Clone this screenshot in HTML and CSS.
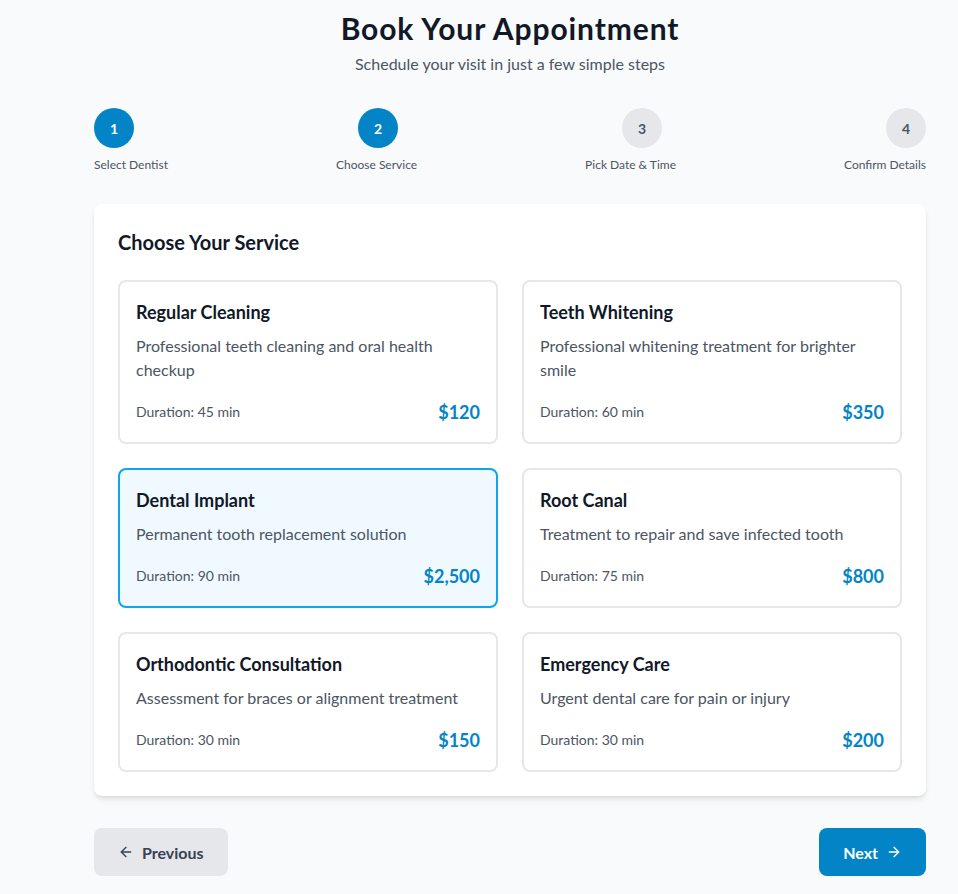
FILE: index.html
```html
<!DOCTYPE html>
<html>
<head>
<meta charset="utf-8">
<link rel="stylesheet" href="styles.css">
</head>
<body>
<div class="page">
  <header class="head">
    <h1 class="title">Book Your Appointment</h1>
    <p class="subtitle">Schedule your visit in just a few simple steps</p>
  </header>

  <div class="steps">
    <div class="circles">
      <span class="circle active">1</span>
      <span class="circle active">2</span>
      <span class="circle">3</span>
      <span class="circle">4</span>
    </div>
    <div class="labels">
      <span>Select Dentist</span>
      <span>Choose Service</span>
      <span>Pick Date &amp; Time</span>
      <span>Confirm Details</span>
    </div>
  </div>

  <section class="panel">
    <h2 class="panel-title">Choose Your Service</h2>
    <div class="grid">
      <div class="svc">
        <h3 class="svc-name">Regular Cleaning</h3>
        <p class="svc-desc">Professional teeth cleaning and oral health checkup</p>
        <div class="svc-foot"><span class="dur">Duration: 45 min</span><span class="price">$120</span></div>
      </div>
      <div class="svc">
        <h3 class="svc-name">Teeth Whitening</h3>
        <p class="svc-desc">Professional whitening treatment for brighter smile</p>
        <div class="svc-foot"><span class="dur">Duration: 60 min</span><span class="price">$350</span></div>
      </div>
      <div class="svc selected">
        <h3 class="svc-name">Dental Implant</h3>
        <p class="svc-desc">Permanent tooth replacement solution</p>
        <div class="svc-foot"><span class="dur">Duration: 90 min</span><span class="price">$2,500</span></div>
      </div>
      <div class="svc">
        <h3 class="svc-name">Root Canal</h3>
        <p class="svc-desc">Treatment to repair and save infected tooth</p>
        <div class="svc-foot"><span class="dur">Duration: 75 min</span><span class="price">$800</span></div>
      </div>
      <div class="svc">
        <h3 class="svc-name">Orthodontic Consultation</h3>
        <p class="svc-desc">Assessment for braces or alignment treatment</p>
        <div class="svc-foot"><span class="dur">Duration: 30 min</span><span class="price">$150</span></div>
      </div>
      <div class="svc">
        <h3 class="svc-name">Emergency Care</h3>
        <p class="svc-desc">Urgent dental care for pain or injury</p>
        <div class="svc-foot"><span class="dur">Duration: 30 min</span><span class="price">$200</span></div>
      </div>
    </div>
  </section>

  <div class="nav">
    <button class="btn btn-prev">
      <svg width="16" height="16" viewBox="0 0 24 24" fill="none" stroke="currentColor" stroke-width="2" stroke-linecap="round" stroke-linejoin="round"><path d="M19 12H5"/><path d="M12 19l-7-7 7-7"/></svg>
      Previous
    </button>
    <button class="btn btn-next">
      Next
      <svg width="16" height="16" viewBox="0 0 24 24" fill="none" stroke="currentColor" stroke-width="2" stroke-linecap="round" stroke-linejoin="round"><path d="M5 12h14"/><path d="M12 5l7 7-7 7"/></svg>
    </button>
  </div>
</div>
</body>
</html>
```

FILE: styles.css
```css
* { box-sizing: border-box; }
html, body { margin: 0; padding: 0; }
body {
  background: #f9fafb;
  font-family: Lato, "Noto Sans", sans-serif;
  color: #111827;
}
.page {
  width: 832px;
  margin: 0 0 0 94px;
  padding: 10px 0 40px;
}
.head { text-align: center; }
.title {
  margin: 0;
  font-size: 30px;
  line-height: 36px;
  font-weight: 700;
  letter-spacing: 0.9px;
  color: #111827;
}
.subtitle {
  margin: 6px 0 0;
  font-size: 16px;
  line-height: 24px;
  color: #4b5563;
}
.steps { margin-top: 32px; }
.circles, .labels {
  display: flex;
  justify-content: space-between;
}
.circle {
  width: 40px;
  height: 40px;
  border-radius: 50%;
  background: #e5e7eb;
  color: #4b5563;
  display: flex;
  align-items: center;
  justify-content: center;
  font-size: 14px;
  font-weight: 700;
}
.circle.active { background: #0284c7; color: #fff; }
.labels {
  margin-top: 9px;
  font-size: 12px;
  line-height: 16px;
  color: #4b5563;
}
.panel {
  margin-top: 31px;
  background: #fff;
  border-radius: 8px;
  box-shadow: 0 4px 6px -1px rgba(0,0,0,0.1), 0 2px 4px -2px rgba(0,0,0,0.1);
  padding: 24px;
}
.panel-title {
  margin: 0 0 24px;
  font-size: 20px;
  line-height: 28px;
  font-weight: 700;
}
.grid {
  display: grid;
  grid-template-columns: 1fr 1fr;
  gap: 24px;
}
.svc {
  border: 2px solid #e5e7eb;
  border-radius: 8px;
  padding: 16px;
  background: #fff;
}
.svc.selected { border-color: #0ea5e9; background: #f0f9ff; }
.svc-name {
  margin: 0 0 8px;
  font-size: 18px;
  line-height: 28px;
  font-weight: 700;
}
.svc-desc {
  margin: 0;
  font-size: 16px;
  line-height: 24px;
  color: #4b5563;
}
.svc-foot {
  margin-top: 16px;
  display: flex;
  justify-content: space-between;
  align-items: center;
}
.dur { font-size: 14px; line-height: 20px; color: #4b5563; }
.price { font-size: 18px; line-height: 28px; font-weight: 700; color: #0284c7; }
.nav {
  margin-top: 32px;
  display: flex;
  justify-content: space-between;
}
.btn {
  height: 48px;
  border: 0;
  border-radius: 8px;
  padding: 0 24px;
  display: flex;
  align-items: center;
  gap: 8px;
  font-family: inherit;
  font-size: 16px;
  font-weight: 700;
  cursor: pointer;
}
.btn-prev { background: #e5e7eb; color: #374151; }
.btn-next { background: #0284c7; color: #fff; }
```
